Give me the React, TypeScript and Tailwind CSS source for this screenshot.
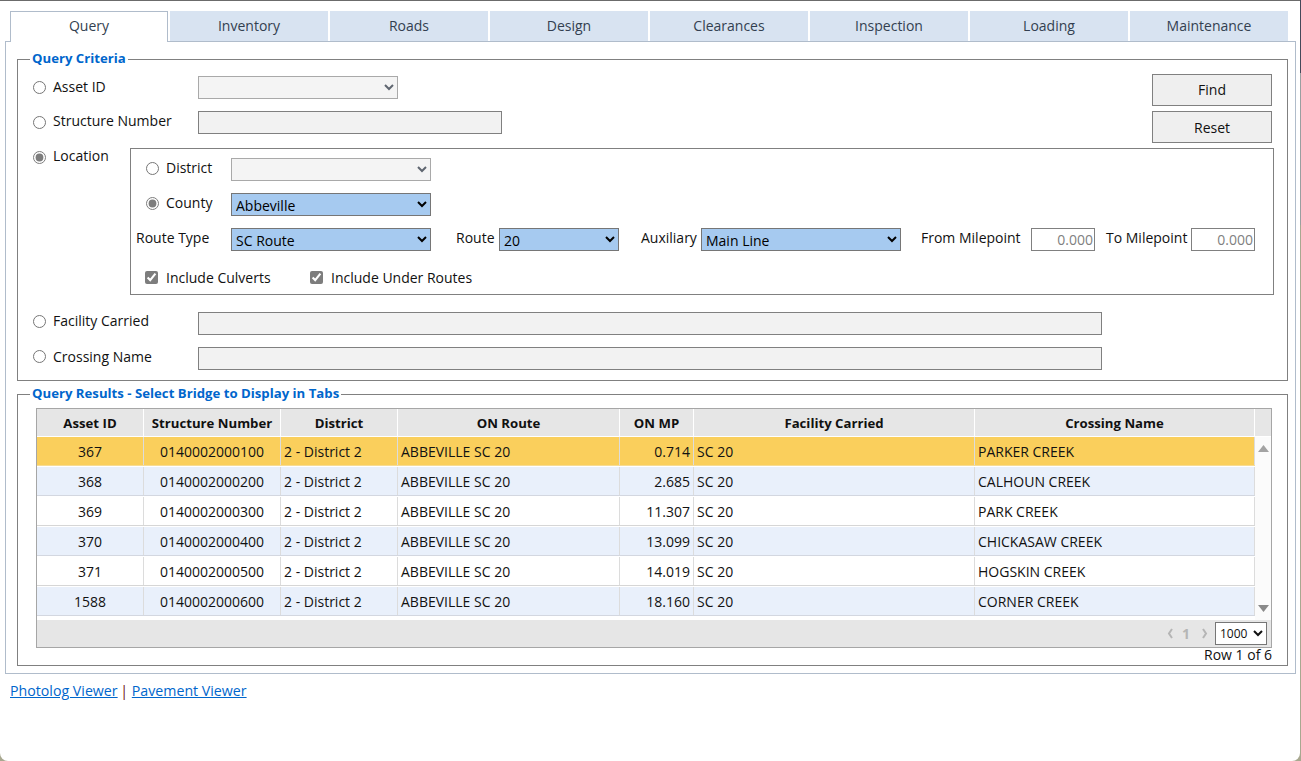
import React from "react";

const tabs = ["Query", "Inventory", "Roads", "Design", "Clearances", "Inspection", "Loading", "Maintenance"];

const rows = [
  ["367", "0140002000100", "0.714", "PARKER CREEK"],
  ["368", "0140002000200", "2.685", "CALHOUN CREEK"],
  ["369", "0140002000300", "11.307", "PARK CREEK"],
  ["370", "0140002000400", "13.099", "CHICKASAW CREEK"],
  ["371", "0140002000500", "14.019", "HOGSKIN CREEK"],
  ["1588", "0140002000600", "18.160", "CORNER CREEK"],
];

function Radio({ checked, className = "" }: { checked?: boolean; className?: string }) {
  return (
    <input
      type="radio"
      readOnly
      checked={!!checked}
      className={`m-0 h-[13px] w-[13px] shrink-0 accent-[#7d7d7d] ${className}`}
    />
  );
}

function BlueSelect({ value, className }: { value: string; className: string }) {
  return (
    <select
      defaultValue={value}
      className={`h-[23px] border border-[#767676] bg-[#a6caf0] pt-[1px] text-black ${className}`}
    >
      <option>{value}</option>
    </select>
  );
}

export default function App() {
  return (
    <div className="h-[761px] overflow-hidden bg-[linear-gradient(#44495a_0,#44495a_73px,#9a9fa0_73px,#9a9fa0_225px,#a8a890_225px)] font-['Open_Sans','Liberation_Sans',sans-serif] text-[14px] leading-[17px] text-[#111]">
      <div className="h-[761px] w-[1300px] rounded-br-[8px] rounded-bl-[8px] border-t border-[#6b6b6b] bg-white pt-[10px] pl-[5px]">
        {/* Tabs */}
        <div className="flex pl-[5px]">
          {tabs.map((t, i) => (
            <div
              key={t}
              className={
                i === 0
                  ? "relative z-10 -mb-px mr-[2px] flex h-[31px] w-[158px] items-center justify-center border border-b-0 border-[#b0bccb] bg-white pb-[3px] text-[#333f50]"
                  : "mr-[2px] flex h-[30px] w-[158px] items-center justify-center bg-[#d8e3f1] pb-[2px] text-[#333f50]"
              }
            >
              {t}
            </div>
          ))}
        </div>

        {/* Tab panel */}
        <div className="h-[633px] w-[1291px] border border-[#b0bccb] pl-[11px] pr-[7px] pt-[8px]">
          <fieldset className="h-[331px] border border-[#808080] pl-[15px] pr-[13px]">
            <legend className="ml-[-3px] px-[2px] pb-[1px] text-[13.2px] font-bold text-[#0066cc]">Query Criteria</legend>
            <div className="flex pt-[8px]">
              <div className="w-[1119px]">
                <div className="flex h-[23px] items-center">
                  <Radio />
                  <span className="ml-[7px] w-[145px] pb-[2px]">Asset ID</span>
                  <select disabled className="h-[23px] w-[200px] border border-[#a9a9a9] bg-[#f4f4f4] text-[#5f6670]" />
                </div>
                <div className="mt-[12px] flex h-[23px] items-center">
                  <Radio />
                  <span className="ml-[7px] w-[145px] pb-[4px]">Structure Number</span>
                  <div className="h-[23px] w-[304px] border border-[#808080] bg-[#f2f2f2]" />
                </div>
              </div>
              <div className="-mt-[2px] flex flex-col gap-[5px]">
                <button className="h-[32px] w-[120px] border border-[#808080] bg-[#efefef] pb-[1px] text-[#111]">Find</button>
                <button className="h-[32px] w-[120px] border border-[#808080] bg-[#efefef] text-[#111]">Reset</button>
              </div>
            </div>

            {/* Location */}
            <div className="mt-[5px] flex">
              <div className="mt-[1px] flex h-[17px] w-[97px] items-center self-start">
                <Radio checked />
                <span className="ml-[7px] pb-[4px]">Location</span>
              </div>
              <div className="h-[147px] w-[1144px] border border-[#808080] pl-[5px] pt-[9px]">
                <div className="flex h-[23px] items-center pl-[10px]">
                  <Radio className="-mt-[2px]" />
                  <span className="ml-[7px] w-[65px] pb-[4px]">District</span>
                  <select disabled className="h-[23px] w-[200px] border border-[#a9a9a9] bg-[#f4f4f4] text-[#5f6670]" />
                </div>
                <div className="mt-[12px] flex h-[23px] items-center pl-[10px]">
                  <Radio checked className="-mt-[2px]" />
                  <span className="ml-[7px] w-[65px] pb-[4px]">County</span>
                  <BlueSelect value="Abbeville" className="w-[200px]" />
                </div>
                <div className="mt-[12px] flex h-[23px] items-center">
                  <span className="w-[95px] pb-[5px]">Route Type</span>
                  <BlueSelect value="SC Route" className="w-[200px]" />
                  <span className="ml-[25px] w-[43px] pb-[5px]">Route</span>
                  <BlueSelect value="20" className="w-[120px]" />
                  <span className="ml-[22px] w-[60px] pb-[5px]">Auxiliary</span>
                  <BlueSelect value="Main Line" className="w-[200px]" />
                  <span className="ml-[20px] w-[110px] pb-[5px]">From Milepoint</span>
                  <div className="h-[23px] w-[64px] border border-[#808080] pr-[1px] text-right leading-[22px] text-[#808080]">0.000</div>
                  <span className="ml-[11px] w-[85px] pb-[5px]">To Milepoint</span>
                  <div className="h-[23px] w-[64px] border border-[#808080] pr-[1px] text-right leading-[22px] text-[#808080]">0.000</div>
                </div>
                <div className="mt-[18px] flex items-center pl-[9px]">
                  <input type="checkbox" readOnly checked className="m-0 h-[13px] w-[13px] accent-[#7d7d7d]" />
                  <span className="ml-[8px] w-[144px]">Include Culverts</span>
                  <input type="checkbox" readOnly checked className="m-0 h-[13px] w-[13px] accent-[#7d7d7d]" />
                  <span className="ml-[8px]">Include Under Routes</span>
                </div>
              </div>
            </div>

            <div className="mt-[17px] flex h-[23px] items-center">
              <Radio className="-mt-[4px]" />
              <span className="ml-[7px] w-[145px] pb-[6px]">Facility Carried</span>
              <div className="h-[23px] w-[904px] border border-[#808080] bg-[#f2f2f2]" />
            </div>
            <div className="mt-[12px] flex h-[23px] items-center">
              <Radio className="-mt-[4px]" />
              <span className="ml-[7px] w-[145px] pb-[4px]">Crossing Name</span>
              <div className="h-[23px] w-[904px] border border-[#808080] bg-[#f2f2f2]" />
            </div>
          </fieldset>

          {/* Results */}
          <fieldset className="mt-[4px] h-[281px] border border-[#808080] pl-[18px] pr-[15px]">
            <legend className="ml-[-6px] px-[2px] pb-[1px] text-[13.2px] font-bold text-[#0066cc]">
              Query Results - Select Bridge to Display in Tabs
            </legend>
            <div className="mt-[5px] h-[240px] w-[1236px] border border-[#a6a6a6] bg-[#e6e6e6]">
              <div className="flex h-[28px] border-b border-white bg-[#e6e6e6] text-[13.2px] font-bold">
                {[
                  ["Asset ID", "w-[107px]"],
                  ["Structure Number", "w-[137px]"],
                  ["District", "w-[117px]"],
                  ["ON Route", "w-[222px]"],
                  ["ON MP", "w-[74px]"],
                  ["Facility Carried", "w-[281px]"],
                  ["Crossing Name", "w-[280px]"],
                ].map(([h, w]) => (
                  <div key={h} className={`flex items-center justify-center border-r border-white pt-[2px] ${w}`}>{h}</div>
                ))}
              </div>
              <div className="flex h-[183px] bg-white">
                <div className="w-[1218px]">
                  {rows.map((r, i) => (
                    <div
                      key={r[0]}
                      className={`mb-px flex h-[29px] border-b ${
                        i === 0
                          ? "border-[#f7dc94] bg-[#facf5c]"
                          : i % 2 === 1
                            ? "border-[#d3d7e0] bg-[#e9f0fb]"
                            : "border-[#d6d6d6] bg-white"
                      }`}
                    >
                      <div className="flex w-[107px] items-center justify-center border-r border-[#dcdcdc]">{r[0]}</div>
                      <div className="flex w-[137px] items-center justify-center border-r border-[#dcdcdc]">{r[1]}</div>
                      <div className="flex w-[117px] items-center border-r border-[#dcdcdc] pl-[3px]">2 - District 2</div>
                      <div className="flex w-[222px] items-center border-r border-[#dcdcdc] pl-[3px]">ABBEVILLE SC 20</div>
                      <div className="flex w-[74px] items-center justify-end border-r border-[#dcdcdc] pr-[3px]">{r[2]}</div>
                      <div className="flex w-[281px] items-center border-r border-[#dcdcdc] pl-[3px]">SC 20</div>
                      <div className="flex w-[280px] items-center border-r border-[#dcdcdc] pl-[3px]">{r[3]}</div>
                    </div>
                  ))}
                </div>
                <div className="flex w-[16px] flex-col items-center justify-between bg-[#fbfbfb] pb-[8px] pt-[8px]">
                  <svg width="11" height="7" viewBox="0 0 11 7"><path d="M5.5 0 11 7H0z" fill="#a3a3a3" /></svg>
                  <svg width="11" height="7" viewBox="0 0 11 7"><path d="M0 0h11L5.5 7z" fill="#8a8a8a" /></svg>
                </div>
              </div>
              <div className="flex h-[27px] items-center justify-end bg-[#e6e6e6] pr-[4px]">
                <svg width="7" height="11" viewBox="0 0 7 11"><path d="M5 1 2 5.5 5 10" fill="none" stroke="#b5b5b5" strokeWidth="2" /></svg>
                <span className="ml-[8px] font-bold text-[#b5b5b5]">1</span>
                <svg className="ml-[11px]" width="7" height="11" viewBox="0 0 7 11"><path d="M2 1 5 5.5 2 10" fill="none" stroke="#b5b5b5" strokeWidth="2" /></svg>
                <select className="ml-[7px] h-[23px] w-[52px] border border-[#767676] bg-white text-[12px]">
                  <option>1000</option>
                </select>
              </div>
            </div>
            <div className="-mt-[2px] w-[1236px] text-right">Row 1 of 6</div>
          </fieldset>
        </div>

        <div className="mt-[8px] pl-[5px] text-[14.2px]">
          <a href="#" className="text-[#0066cc] underline">Photolog Viewer</a>
          <span className="-ml-[1px] text-[#6b1010]"> | </span>
          <a href="#" className="text-[#0066cc] underline">Pavement Viewer</a>
        </div>
      </div>
    </div>
  );
}
